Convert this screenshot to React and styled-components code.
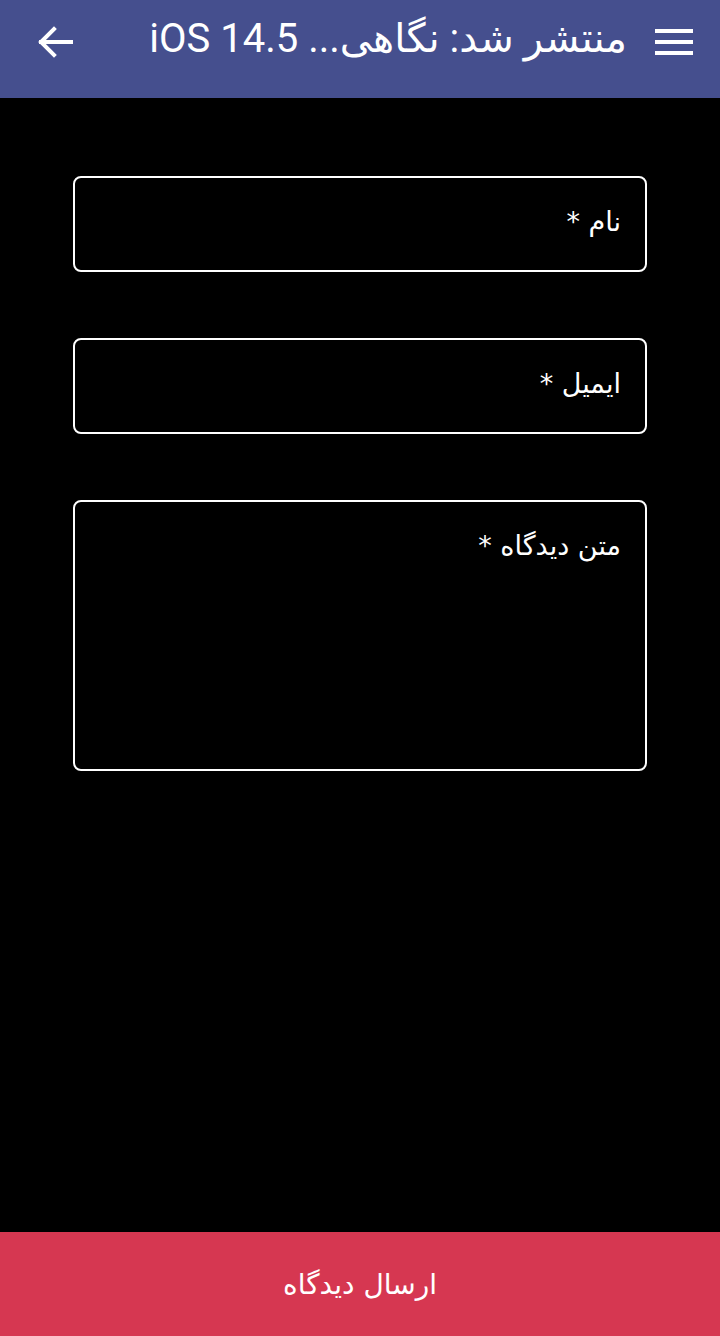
import styled, { createGlobalStyle } from "styled-components";

const GlobalStyle = createGlobalStyle`
    html, body {
        margin: 0;
        padding: 0;
        background: #000;
    }
    * {
        box-sizing: border-box;
    }
`;

const App = () => {
    return (
        <Page>
            <GlobalStyle />
            <TopBar>
                <IconButton aria-label="menu">
                    <svg width="38" height="26" viewBox="0 0 38 26">
                        <rect x="0" y="0" width="38" height="4" fill="#fff" />
                        <rect x="0" y="11" width="38" height="4" fill="#fff" />
                        <rect x="0" y="22" width="38" height="4" fill="#fff" />
                    </svg>
                </IconButton>
                <Title>منتشر شد: نگاهی... iOS 14.5</Title>
                <IconButton aria-label="back">
                    <svg width="36" height="32" viewBox="0 0 36 32">
                        <path d="M34 16H4M17 3L4 16l13 13" stroke="#fff" strokeWidth="4" fill="none" strokeLinecap="square" />
                    </svg>
                </IconButton>
            </TopBar>
            <Form>
                <Field $height={96}>
                    <Label>نام *</Label>
                </Field>
                <Field $height={96}>
                    <Label>ایمیل *</Label>
                </Field>
                <Field $height={271}>
                    <Label>متن دیدگاه *</Label>
                </Field>
            </Form>
            <Submit>ارسال دیدگاه</Submit>
        </Page>
    );
}

const Page = styled.div`
    display: flex;
    flex-direction: column;
    min-height: 1336px;
    background: #000;
    font-family: "DejaVu Sans", "Noto Sans", sans-serif;
`;

const TopBar = styled.div`
    height: 98px;
    background-color: #454f8e;
    direction: rtl;
    display: flex;
    align-items: center;
    padding: 0 26px 14px 35px;
`;

const IconButton = styled.div`
    display: flex;
    align-items: center;
    justify-content: center;
    width: 40px;
    height: 40px;
`;

const Title = styled.div`
    flex: 1;
    color: #fff;
    font-family: Roboto, "DejaVu Sans", sans-serif;
    font-size: 40px;
    padding-right: 27px;
    white-space: nowrap;
    margin-top: -8px;
`;

const Form = styled.div`
    flex: 1;
    display: flex;
    flex-direction: column;
    gap: 66px;
    padding: 78px 73px 0;
    direction: rtl;
`;

const Field = styled.div`
    height: ${p => p.$height}px;
    border: 2px solid #fff;
    border-radius: 8px;
    padding: 28px 24px 0;
`;

const Label = styled.span`
    color: #fff;
    font-size: 27px;
`;

const Submit = styled.div`
    height: 104px;
    background-color: #d63751;
    color: #fff;
    display: flex;
    align-items: center;
    justify-content: center;
    font-size: 28px;
    direction: rtl;
`;

export default App;
